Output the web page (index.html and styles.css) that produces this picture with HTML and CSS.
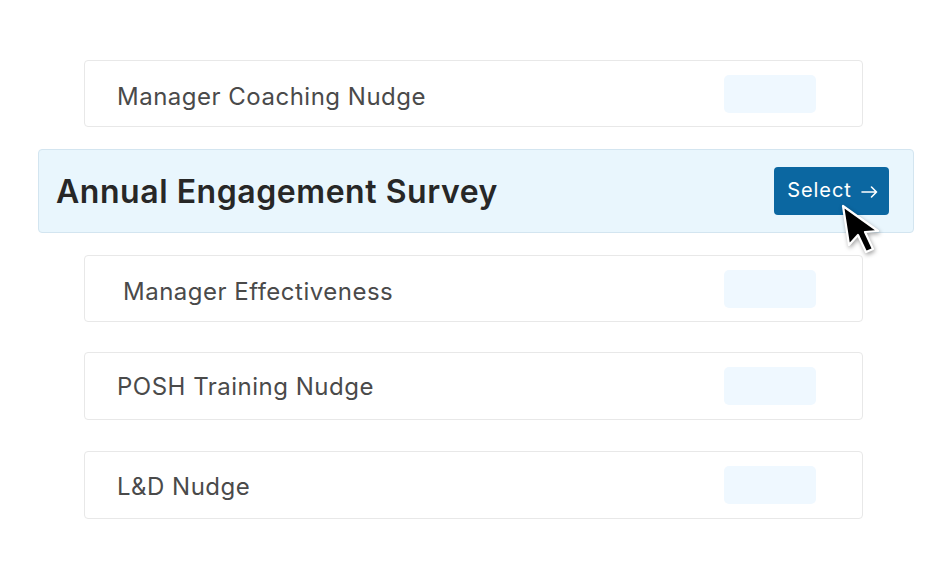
FILE: index.html
```html
<!DOCTYPE html>
<html lang="en">
<head>
<meta charset="utf-8">
<title>Survey list</title>
<link rel="stylesheet" href="styles.css">
</head>
<body>
<main class="list">
  <div class="row">
    <span class="label label--low">Manager Coaching Nudge</span>
    <span class="placeholder"></span>
  </div>
  <div class="row row--active">
    <span class="title">Annual Engagement Survey</span>
    <span class="btn-wrap">
      <button class="btn">Select
        <svg class="arrow" width="17" height="12" viewBox="0 0 17 12" aria-hidden="true">
          <path d="M1 6 H15.5 M10.5 1 L15.5 6 L10.5 11" fill="none" stroke="#fff" stroke-width="1.6" stroke-linecap="round" stroke-linejoin="round"/>
        </svg>
      </button>
      <svg class="cursor" width="46" height="58" viewBox="0 0 46 58" aria-hidden="true">
        <path d="M3 3 L9 42 L18 32 L26 49 L33 46 L25 29 L38 28 Z" fill="#000" stroke="#fff" stroke-width="2.2" stroke-linejoin="round"/>
      </svg>
    </span>
  </div>
  <div class="row">
    <span class="label label--indent label--low">Manager Effectiveness</span>
    <span class="placeholder"></span>
  </div>
  <div class="row row--tall row--gap">
    <span class="label">POSH Training Nudge</span>
    <span class="placeholder"></span>
  </div>
  <div class="row row--tall row--gap2">
    <span class="label label--low2">L&amp;D Nudge</span>
    <span class="placeholder"></span>
  </div>
</main>
</body>
</html>
```

FILE: styles.css
```css
html, body {
  margin: 0;
  padding: 0;
  background: #ffffff;
}

body {
  font-family: Inter, "Noto Sans", "Liberation Sans", sans-serif;
  width: 952px;
  height: 580px;
  overflow: hidden;
}

.list {
  display: flex;
  flex-direction: column;
  gap: 22px;
  padding: 60px 0 0 84px;
}

.row {
  box-sizing: border-box;
  width: 779px;
  height: 67px;
  display: flex;
  align-items: center;
  justify-content: space-between;
  border: 1px solid #e8e8e8;
  border-radius: 4px;
  background: #ffffff;
  padding: 0 46px 0 32px;
}

.row--tall { height: 68px; }
.row--gap { margin-top: 8px; }
.row--gap2 { margin-top: 9px; }

.label {
  font-size: 24px;
  color: #4a4a4a;
  letter-spacing: 0.5px;
}

.label--low { padding-top: 6px; }
.label--low2 { padding-top: 3px; }
.label--indent { padding-left: 6px; }

.placeholder {
  width: 92px;
  height: 38px;
  border-radius: 5px;
  background: #eff8ff;
}

.row--active {
  width: 876px;
  height: 84px;
  margin-left: -46px;
  background: #e9f6fd;
  border-color: #d3e5f0;
  padding: 0 24px 0 17px;
}

.title {
  font-size: 32px;
  font-weight: 600;
  color: #272727;
  letter-spacing: 0.55px;
}

.btn-wrap {
  position: relative;
  display: flex;
}

.btn {
  box-sizing: border-box;
  width: 115px;
  height: 48px;
  border: 0;
  border-radius: 4px;
  background: #0b67a1;
  color: #ffffff;
  font-family: Inter, "Noto Sans", "Liberation Sans", sans-serif;
  font-size: 20px;
  font-weight: 400;
  letter-spacing: 0.9px;
  padding: 0 0 2px 2px;
  display: flex;
  align-items: center;
  justify-content: center;
  gap: 9px;
}

.arrow {
  margin-top: 3px;
}

.cursor {
  position: absolute;
  left: 66px;
  top: 36px;
  filter: drop-shadow(1px 2px 2px rgba(0, 0, 0, 0.35));
}
```
